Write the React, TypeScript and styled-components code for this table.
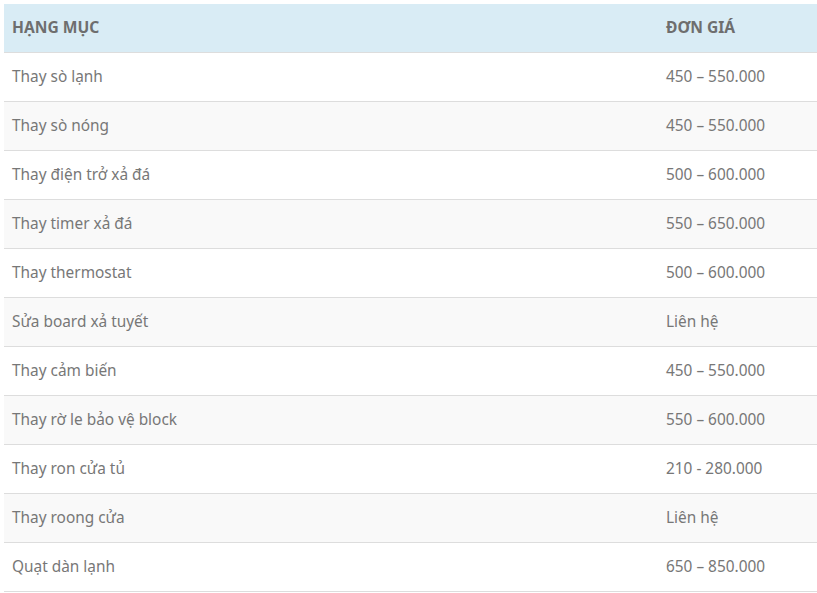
import React from "react";
import styled, { createGlobalStyle } from "styled-components";

const Global = createGlobalStyle`
  html, body { margin: 0; padding: 0; background: #fff; }
  body { padding: 4px 0 0 4px; overflow: hidden; }
`;

const Table = styled.table`
  width: 813px;
  border-collapse: collapse;
  font-family: "Noto Sans", "Open Sans", sans-serif;
  font-size: 15.4px;
  color: #777;
`;

const HeadRow = styled.tr`
  background: #d9ecf5;
`;

const Th = styled.th<{ $w?: string }>`
  text-align: left;
  font-weight: 700;
  font-size: 15.6px;
  color: #6e6e6e;
  height: 46px;
  padding: 0 8px 2px;
  width: ${(p) => p.$w ?? "auto"};
  border-bottom: 1px solid #dddddd;
`;

const Row = styled.tr<{ $alt: boolean }>`
  background: ${(p) => (p.$alt ? "#f9f9f9" : "#fff")};
`;

const Td = styled.td`
  height: 46px;
  padding: 0 8px 2px;
  border-bottom: 1px solid #dddddd;
`;

const rows: [string, string][] = [
  ["Thay sò lạnh", "450 – 550.000"],
  ["Thay sò nóng", "450 – 550.000"],
  ["Thay điện trở xả đá", "500 – 600.000"],
  ["Thay timer xả đá", "550 – 650.000"],
  ["Thay thermostat", "500 – 600.000"],
  ["Sửa board xả tuyết", "Liên hệ"],
  ["Thay cảm biến", "450 – 550.000"],
  ["Thay rờ le bảo vệ block", "550 – 600.000"],
  ["Thay ron cửa tủ", "210 - 280.000"],
  ["Thay roong cửa", "Liên hệ"],
  ["Quạt dàn lạnh", "650 – 850.000"],
];

export default function App() {
  return (
    <>
      <Global />
      <Table>
        <thead>
          <HeadRow>
            <Th $w="638px">HẠNG MỤC</Th>
            <Th>ĐƠN GIÁ</Th>
          </HeadRow>
        </thead>
        <tbody>
          {rows.map(([a, b], i) => (
            <Row key={i} $alt={i % 2 === 1}>
              <Td>{a}</Td>
              <Td>{b}</Td>
            </Row>
          ))}
        </tbody>
      </Table>
    </>
  );
}
